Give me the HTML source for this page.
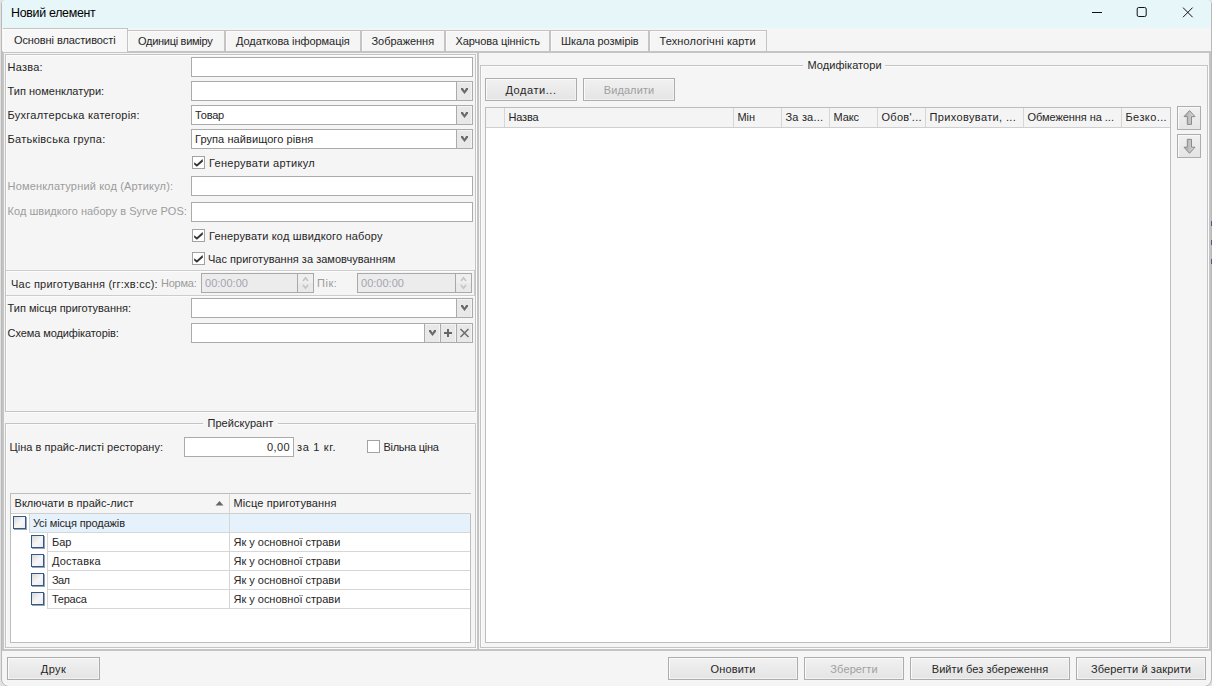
<!DOCTYPE html>
<html><head><meta charset="utf-8"><style>
html,body{margin:0;padding:0;}
body{width:1212px;height:686px;position:relative;overflow:hidden;background:#e2e2e2;font-family:"Liberation Sans",sans-serif;}
.t{position:absolute;white-space:nowrap;line-height:13px;font-family:"Liberation Sans",sans-serif;}
</style></head><body>
<div style="position:absolute;left:1px;top:0px;width:1211px;height:687px;box-sizing:border-box;background:#f5f5f5;border:1px solid #b9b9b9;border-radius:4px 4px 8px 8px;"></div>
<div style="position:absolute;left:2px;top:0px;width:1209px;height:28px;background:#e7f6f8;border-radius:3px 3px 0 0;"></div>
<div class="t" style="left:11px;top:7.20px;font-size:12.4px;color:#000;letter-spacing:-0.292px;">Новий елемент</div>
<svg style="position:absolute;left:1085px;top:4px" width="120" height="18" viewBox="0 0 120 18"><line x1="7" y1="8.5" x2="17" y2="8.5" stroke="#111" stroke-width="1"/><rect x="52.2" y="3.5" width="9" height="9" rx="1.5" fill="none" stroke="#111" stroke-width="1"/><path d="M98 3.6 L107.6 13.2 M107.6 3.6 L98 13.2" stroke="#111" stroke-width="1"/></svg>
<div style="position:absolute;left:2px;top:51px;width:1209px;height:600px;box-sizing:border-box;border:2px solid #c4c4c4;"></div>
<div style="position:absolute;left:3px;top:28px;width:125px;height:24px;box-sizing:border-box;background:#f7f7f7;border:1px solid #c4c4c4;border-left:none;border-bottom:none;box-shadow:inset 1px 1px 0 #fbfbfb;"></div>
<div class="t" style="left:14px;top:33.69px;font-size:11px;color:#262626;letter-spacing:-0.094px;">Основні властивості</div>
<div style="position:absolute;left:128px;top:30px;width:97px;height:21px;box-sizing:border-box;background:#f5f5f5;border:1px solid #c4c4c4;border-left:none;border-bottom:none;box-shadow:inset 1px 1px 0 #fafafa;"></div>
<div class="t" style="left:138px;top:34.69px;font-size:11px;color:#262626;letter-spacing:-0.285px;">Одиниці виміру</div>
<div style="position:absolute;left:225px;top:30px;width:136px;height:21px;box-sizing:border-box;background:#f5f5f5;border:1px solid #c4c4c4;border-left:1px solid #c4c4c4;border-bottom:none;box-shadow:inset 1px 1px 0 #fafafa;"></div>
<div class="t" style="left:236px;top:34.69px;font-size:11px;color:#262626;letter-spacing:-0.063px;">Додаткова інформація</div>
<div style="position:absolute;left:361px;top:30px;width:84px;height:21px;box-sizing:border-box;background:#f5f5f5;border:1px solid #c4c4c4;border-left:1px solid #c4c4c4;border-bottom:none;box-shadow:inset 1px 1px 0 #fafafa;"></div>
<div class="t" style="left:371.5px;top:34.69px;font-size:11px;color:#262626;letter-spacing:-0.033px;">Зображення</div>
<div style="position:absolute;left:445px;top:30px;width:105px;height:21px;box-sizing:border-box;background:#f5f5f5;border:1px solid #c4c4c4;border-left:1px solid #c4c4c4;border-bottom:none;box-shadow:inset 1px 1px 0 #fafafa;"></div>
<div class="t" style="left:455.5px;top:34.69px;font-size:11px;color:#262626;letter-spacing:-0.073px;">Харчова цінність</div>
<div style="position:absolute;left:550px;top:30px;width:99px;height:21px;box-sizing:border-box;background:#f5f5f5;border:1px solid #c4c4c4;border-left:1px solid #c4c4c4;border-bottom:none;box-shadow:inset 1px 1px 0 #fafafa;"></div>
<div class="t" style="left:561px;top:34.69px;font-size:11px;color:#262626;letter-spacing:-0.054px;">Шкала розмірів</div>
<div style="position:absolute;left:649px;top:30px;width:118px;height:21px;box-sizing:border-box;background:#f5f5f5;border:1px solid #c4c4c4;border-left:1px solid #c4c4c4;border-bottom:none;box-shadow:inset 1px 1px 0 #fafafa;"></div>
<div class="t" style="left:659.5px;top:34.69px;font-size:11px;color:#262626;letter-spacing:0.118px;">Технологічні карти</div>
<div style="position:absolute;left:477px;top:53px;width:2px;height:596px;background:#c4c4c4;"></div>
<div style="position:absolute;left:5px;top:54px;width:471px;height:358px;box-sizing:border-box;border:1px solid #c4c4c4;box-shadow:inset 1px 1px 0 #fcfcfc,1px 1px 0 #fcfcfc;"></div>
<div class="t" style="left:7.6px;top:60.69px;font-size:11px;color:#262626;letter-spacing:0.220px;">Назва:</div>
<div class="t" style="left:7.6px;top:84.69px;font-size:11px;color:#262626;letter-spacing:0.006px;">Тип номенклатури:</div>
<div class="t" style="left:7.6px;top:108.69px;font-size:11px;color:#262626;letter-spacing:0.248px;">Бухгалтерська категорія:</div>
<div class="t" style="left:7.6px;top:132.69px;font-size:11px;color:#262626;letter-spacing:0.276px;">Батьківська група:</div>
<div class="t" style="left:7.6px;top:179.69px;font-size:11px;color:#9c9c9c;letter-spacing:0.168px;">Номенклатурний код (Артикул):</div>
<div class="t" style="left:7.6px;top:204.69px;font-size:11px;color:#9c9c9c;letter-spacing:0.023px;">Код швидкого набору в Syrve POS:</div>
<div style="position:absolute;left:191px;top:57px;width:282px;height:20px;box-sizing:border-box;background:#fff;border:1px solid #ababab;"></div>
<div style="position:absolute;left:191px;top:81px;width:282px;height:20px;box-sizing:border-box;background:#fff;border:1px solid #ababab;"></div>
<div style="position:absolute;left:456px;top:81px;width:17px;height:20px;box-sizing:border-box;background:#e8e8e8;border:1px solid #ababab;box-shadow:inset -1px 1px 0 #f4f4f4;"></div>
<svg style="position:absolute;left:456px;top:81px" width="17" height="20" viewBox="0 0 17 20"><path d="M5 7 H6.9 L8.5 9.8 L10.1 7 H12 V8.6 L8.5 13.1 L5 8.6 Z" fill="#686868"/></svg>
<div style="position:absolute;left:191px;top:105px;width:282px;height:20px;box-sizing:border-box;background:#fff;border:1px solid #ababab;"></div>
<div style="position:absolute;left:456px;top:105px;width:17px;height:20px;box-sizing:border-box;background:#e8e8e8;border:1px solid #ababab;box-shadow:inset -1px 1px 0 #f4f4f4;"></div>
<svg style="position:absolute;left:456px;top:105px" width="17" height="20" viewBox="0 0 17 20"><path d="M5 7 H6.9 L8.5 9.8 L10.1 7 H12 V8.6 L8.5 13.1 L5 8.6 Z" fill="#686868"/></svg>
<div class="t" style="left:195px;top:108.69px;font-size:11px;color:#262626;letter-spacing:-0.175px;">Товар</div>
<div style="position:absolute;left:191px;top:129px;width:282px;height:20px;box-sizing:border-box;background:#fff;border:1px solid #ababab;"></div>
<div style="position:absolute;left:456px;top:129px;width:17px;height:20px;box-sizing:border-box;background:#e8e8e8;border:1px solid #ababab;box-shadow:inset -1px 1px 0 #f4f4f4;"></div>
<svg style="position:absolute;left:456px;top:129px" width="17" height="20" viewBox="0 0 17 20"><path d="M5 7 H6.9 L8.5 9.8 L10.1 7 H12 V8.6 L8.5 13.1 L5 8.6 Z" fill="#686868"/></svg>
<div class="t" style="left:195px;top:132.69px;font-size:11px;color:#262626;letter-spacing:0.080px;">Група найвищого рівня</div>
<div style="position:absolute;left:192px;top:156px;width:13px;height:13px;box-sizing:border-box;background:#fff;border:1px solid #a2a2a2;"></div>
<svg style="position:absolute;left:192px;top:156px" width="13" height="13" viewBox="0 0 13 13"><path d="M2.1 6.2 L4.9 8.2 L10.6 2.9 L10.9 5.5 L4.9 10.8 L2.2 8.4 Z" fill="#333"/></svg>
<div class="t" style="left:209px;top:156.69px;font-size:11px;color:#262626;letter-spacing:0.294px;">Генерувати артикул</div>
<div style="position:absolute;left:191px;top:176px;width:282px;height:20px;box-sizing:border-box;background:#fff;border:1px solid #ababab;"></div>
<div style="position:absolute;left:191px;top:202px;width:282px;height:20px;box-sizing:border-box;background:#fff;border:1px solid #ababab;"></div>
<div style="position:absolute;left:192px;top:229px;width:13px;height:13px;box-sizing:border-box;background:#fff;border:1px solid #a2a2a2;"></div>
<svg style="position:absolute;left:192px;top:229px" width="13" height="13" viewBox="0 0 13 13"><path d="M2.1 6.2 L4.9 8.2 L10.6 2.9 L10.9 5.5 L4.9 10.8 L2.2 8.4 Z" fill="#333"/></svg>
<div class="t" style="left:209px;top:229.69px;font-size:11px;color:#262626;letter-spacing:0.172px;">Генерувати код швидкого набору</div>
<div style="position:absolute;left:192px;top:252px;width:13px;height:13px;box-sizing:border-box;background:#fff;border:1px solid #a2a2a2;"></div>
<svg style="position:absolute;left:192px;top:252px" width="13" height="13" viewBox="0 0 13 13"><path d="M2.1 6.2 L4.9 8.2 L10.6 2.9 L10.9 5.5 L4.9 10.8 L2.2 8.4 Z" fill="#333"/></svg>
<div class="t" style="left:208px;top:252.69px;font-size:11px;color:#262626;letter-spacing:0.019px;">Час приготування за замовчуванням</div>
<div style="position:absolute;left:6px;top:270px;width:469px;height:26px;box-sizing:border-box;border:1px solid #cdcdcd;border-left:none;box-shadow:inset 0 1px 0 #fcfcfc,0 1px 0 #fcfcfc;"></div>
<div class="t" style="left:11px;top:277.69px;font-size:11px;color:#262626;letter-spacing:0.230px;">Час приготування (гг:хв:сс):</div>
<div class="t" style="left:161px;top:276.69px;font-size:11px;color:#9c9c9c;letter-spacing:-0.240px;">Норма:</div>
<div style="position:absolute;left:201px;top:273px;width:113px;height:20px;box-sizing:border-box;background:#ececec;border:1px solid #a9a9a9;"></div>
<div style="position:absolute;left:297px;top:273px;width:17px;height:20px;box-sizing:border-box;border:1px solid #a9a9a9;background:linear-gradient(#efefef 0,#efefef 50%,#e9e9e9 50%,#e9e9e9 100%);"></div>
<svg style="position:absolute;left:297px;top:273px" width="17" height="20" viewBox="0 0 17 20"><path d="M6 7.9 L8.5 4.8 L11 7.9 M6 12.1 L8.5 15.2 L11 12.1" fill="none" stroke="#c4c4c4" stroke-width="1.6"/></svg>
<div class="t" style="left:205px;top:276.69px;font-size:11px;color:#a4a4b0;letter-spacing:0.014px;">00:00:00</div>
<div class="t" style="left:317px;top:276.69px;font-size:11px;color:#9c9c9c;letter-spacing:0.533px;">Пік:</div>
<div style="position:absolute;left:357px;top:273px;width:115px;height:20px;box-sizing:border-box;background:#ececec;border:1px solid #a9a9a9;"></div>
<div style="position:absolute;left:455px;top:273px;width:17px;height:20px;box-sizing:border-box;border:1px solid #a9a9a9;background:linear-gradient(#efefef 0,#efefef 50%,#e9e9e9 50%,#e9e9e9 100%);"></div>
<svg style="position:absolute;left:455px;top:273px" width="17" height="20" viewBox="0 0 17 20"><path d="M6 7.9 L8.5 4.8 L11 7.9 M6 12.1 L8.5 15.2 L11 12.1" fill="none" stroke="#c4c4c4" stroke-width="1.6"/></svg>
<div class="t" style="left:361px;top:276.69px;font-size:11px;color:#a4a4b0;letter-spacing:0.014px;">00:00:00</div>
<div class="t" style="left:7.6px;top:301.69px;font-size:11px;color:#262626;letter-spacing:-0.014px;">Тип місця приготування:</div>
<div style="position:absolute;left:191px;top:298px;width:282px;height:20px;box-sizing:border-box;background:#fff;border:1px solid #ababab;"></div>
<div style="position:absolute;left:456px;top:298px;width:17px;height:20px;box-sizing:border-box;background:#e8e8e8;border:1px solid #ababab;box-shadow:inset -1px 1px 0 #f4f4f4;"></div>
<svg style="position:absolute;left:456px;top:298px" width="17" height="20" viewBox="0 0 17 20"><path d="M5 7 H6.9 L8.5 9.8 L10.1 7 H12 V8.6 L8.5 13.1 L5 8.6 Z" fill="#686868"/></svg>
<div class="t" style="left:7.6px;top:326.69px;font-size:11px;color:#262626;letter-spacing:-0.100px;">Схема модифікаторів:</div>
<div style="position:absolute;left:191px;top:323px;width:282px;height:20px;box-sizing:border-box;background:#fff;border:1px solid #ababab;"></div>
<div style="position:absolute;left:424px;top:323px;width:17px;height:20px;box-sizing:border-box;background:#e8e8e8;border:1px solid #ababab;box-shadow:inset -1px 1px 0 #f4f4f4;"></div>
<div style="position:absolute;left:440px;top:323px;width:17px;height:20px;box-sizing:border-box;background:#e8e8e8;border:1px solid #ababab;box-shadow:inset -1px 1px 0 #f4f4f4;"></div>
<div style="position:absolute;left:456px;top:323px;width:17px;height:20px;box-sizing:border-box;background:#e8e8e8;border:1px solid #ababab;box-shadow:inset -1px 1px 0 #f4f4f4;"></div>
<svg style="position:absolute;left:424px;top:323px" width="17" height="20" viewBox="0 0 17 20"><path d="M5 7 H6.9 L8.5 9.8 L10.1 7 H12 V8.6 L8.5 13.1 L5 8.6 Z" fill="#686868"/></svg>
<svg style="position:absolute;left:440px;top:323px" width="17" height="20" viewBox="0 0 17 20"><path d="M8 6 V14 M4 10 H12" stroke="#666" stroke-width="2"/></svg>
<svg style="position:absolute;left:456px;top:323px" width="17" height="20" viewBox="0 0 17 20"><path d="M4.5 6 L12.5 14 M12.5 6 L4.5 14" stroke="#6b6b6b" stroke-width="1.5"/></svg>
<div style="position:absolute;left:5px;top:423px;width:471px;height:225px;box-sizing:border-box;border:1px solid #c4c4c4;box-shadow:inset 1px 1px 0 #fcfcfc,1px 1px 0 #fcfcfc;"></div>
<div style="position:absolute;left:203px;top:415px;width:75px;height:14px;background:#f5f5f5;"></div>
<div class="t" style="left:207.5px;top:416.69px;font-size:11px;color:#262626;letter-spacing:0.040px;">Прейскурант</div>
<div class="t" style="left:9.5px;top:440.69px;font-size:11px;color:#262626;letter-spacing:0.039px;">Ціна в прайс-листі ресторану:</div>
<div style="position:absolute;left:184px;top:437px;width:110px;height:20px;box-sizing:border-box;background:#fff;border:1px solid #ababab;"></div>
<div class="t" style="left:0px;top:440.69px;font-size:11px;color:#262626;letter-spacing:0.400px;width:290px;text-align:right;">0,00</div>
<div class="t" style="left:297px;top:440.69px;font-size:11px;color:#262626;letter-spacing:0.671px;">за 1 кг.</div>
<div style="position:absolute;left:367px;top:440px;width:13px;height:13px;box-sizing:border-box;background:#fff;border:1px solid #a2a2a2;"></div>
<div class="t" style="left:383.5px;top:440.69px;font-size:11px;color:#262626;letter-spacing:-0.280px;">Вільна ціна</div>
<div style="position:absolute;left:10px;top:493px;width:461px;height:150px;box-sizing:border-box;background:#fff;border:1px solid #bdbdbd;"></div>
<div style="position:absolute;left:11px;top:494px;width:460px;height:20px;background:#f5f5f5;border-bottom:1px solid #cfcfcf;box-sizing:border-box;"></div>
<div style="position:absolute;left:229px;top:494px;width:1px;height:19px;background:#d6d6d6;"></div>
<div class="t" style="left:14.5px;top:496.69px;font-size:11px;color:#262626;letter-spacing:0.050px;">Включати в прайс-лист</div>
<svg style="position:absolute;left:215px;top:499px" width="10" height="8" viewBox="0 0 10 8"><path d="M0.5 6.5 L4.5 2 L8.5 6.5 Z" fill="#666"/></svg>
<div class="t" style="left:233.5px;top:496.69px;font-size:11px;color:#262626;letter-spacing:0.118px;">Місце приготування</div>
<div style="position:absolute;left:29px;top:514px;width:441px;height:19px;background:#e5f1fb;border-bottom:1px solid #d6d6d6;box-sizing:border-box;"></div>
<div style="position:absolute;left:229px;top:514px;width:1px;height:19px;background:#d6d6d6;"></div>
<div style="position:absolute;left:29px;top:514px;width:1px;height:19px;background:#d6d6d6;"></div>
<div style="position:absolute;left:13px;top:516px;width:13px;height:13px;box-sizing:border-box;background:linear-gradient(135deg,#d9d9d9 0%,#f7f7f7 55%,#ececec 100%);border:1px solid #35588c;box-shadow:1px 1px 0 #9aa3b0;"></div>
<div class="t" style="left:33px;top:516.69px;font-size:11px;color:#262626;letter-spacing:-0.129px;">Усі місця продажів</div>
<div style="position:absolute;left:47px;top:533px;width:423px;height:19px;border-bottom:1px solid #d6d6d6;box-sizing:border-box;"></div>
<div style="position:absolute;left:229px;top:533px;width:1px;height:19px;background:#d6d6d6;"></div>
<div style="position:absolute;left:47px;top:533px;width:1px;height:19px;background:#d6d6d6;"></div>
<div style="position:absolute;left:31px;top:535px;width:13px;height:13px;box-sizing:border-box;background:linear-gradient(135deg,#d9d9d9 0%,#f7f7f7 55%,#ececec 100%);border:1px solid #35588c;box-shadow:1px 1px 0 #9aa3b0;"></div>
<div class="t" style="left:52px;top:535.69px;font-size:11px;color:#262626;">Бар</div>
<div class="t" style="left:233.5px;top:535.69px;font-size:11px;color:#262626;letter-spacing:-0.016px;">Як у основної страви</div>
<div style="position:absolute;left:47px;top:552px;width:423px;height:19px;border-bottom:1px solid #d6d6d6;box-sizing:border-box;"></div>
<div style="position:absolute;left:229px;top:552px;width:1px;height:19px;background:#d6d6d6;"></div>
<div style="position:absolute;left:47px;top:552px;width:1px;height:19px;background:#d6d6d6;"></div>
<div style="position:absolute;left:31px;top:554px;width:13px;height:13px;box-sizing:border-box;background:linear-gradient(135deg,#d9d9d9 0%,#f7f7f7 55%,#ececec 100%);border:1px solid #35588c;box-shadow:1px 1px 0 #9aa3b0;"></div>
<div class="t" style="left:52px;top:554.69px;font-size:11px;color:#262626;letter-spacing:0.186px;">Доставка</div>
<div class="t" style="left:233.5px;top:554.69px;font-size:11px;color:#262626;letter-spacing:-0.016px;">Як у основної страви</div>
<div style="position:absolute;left:47px;top:571px;width:423px;height:19px;border-bottom:1px solid #d6d6d6;box-sizing:border-box;"></div>
<div style="position:absolute;left:229px;top:571px;width:1px;height:19px;background:#d6d6d6;"></div>
<div style="position:absolute;left:47px;top:571px;width:1px;height:19px;background:#d6d6d6;"></div>
<div style="position:absolute;left:31px;top:573px;width:13px;height:13px;box-sizing:border-box;background:linear-gradient(135deg,#d9d9d9 0%,#f7f7f7 55%,#ececec 100%);border:1px solid #35588c;box-shadow:1px 1px 0 #9aa3b0;"></div>
<div class="t" style="left:52px;top:573.69px;font-size:11px;color:#262626;letter-spacing:-0.600px;">Зал</div>
<div class="t" style="left:233.5px;top:573.69px;font-size:11px;color:#262626;letter-spacing:-0.016px;">Як у основної страви</div>
<div style="position:absolute;left:47px;top:590px;width:423px;height:19px;border-bottom:1px solid #d6d6d6;box-sizing:border-box;"></div>
<div style="position:absolute;left:229px;top:590px;width:1px;height:19px;background:#d6d6d6;"></div>
<div style="position:absolute;left:47px;top:590px;width:1px;height:19px;background:#d6d6d6;"></div>
<div style="position:absolute;left:31px;top:592px;width:13px;height:13px;box-sizing:border-box;background:linear-gradient(135deg,#d9d9d9 0%,#f7f7f7 55%,#ececec 100%);border:1px solid #35588c;box-shadow:1px 1px 0 #9aa3b0;"></div>
<div class="t" style="left:52px;top:592.69px;font-size:11px;color:#262626;letter-spacing:-0.240px;">Тераса</div>
<div class="t" style="left:233.5px;top:592.69px;font-size:11px;color:#262626;letter-spacing:-0.016px;">Як у основної страви</div>
<div style="position:absolute;left:480px;top:65px;width:728px;height:583px;box-sizing:border-box;border:1px solid #c4c4c4;box-shadow:inset 1px 1px 0 #fcfcfc,1px 1px 0 #fcfcfc;"></div>
<div style="position:absolute;left:803px;top:58px;width:82px;height:14px;background:#f5f5f5;"></div>
<div class="t" style="left:807.5px;top:58.69px;font-size:11px;color:#262626;letter-spacing:0.055px;">Модифікатори</div>
<div style="position:absolute;left:485px;top:78px;width:92px;height:23px;box-sizing:border-box;background:linear-gradient(#f1f1f1,#e4e4e4);border:1px solid #adadad;box-shadow:inset 1px 1px 0 #fafafa,inset -1px -1px 0 #f2f2f2;"></div>
<div class="t" style="left:485px;top:83.69px;font-size:11px;color:#262626;letter-spacing:0.562px;width:92px;text-align:center;">Додати...</div>
<div style="position:absolute;left:583px;top:78px;width:92px;height:23px;box-sizing:border-box;background:linear-gradient(#f1f1f1,#e4e4e4);border:1px solid #adadad;box-shadow:inset 1px 1px 0 #fafafa,inset -1px -1px 0 #f2f2f2;"></div>
<div class="t" style="left:583px;top:83.69px;font-size:11px;color:#a0a0a0;letter-spacing:0.100px;width:92px;text-align:center;">Видалити</div>
<div style="position:absolute;left:485px;top:107px;width:686px;height:536px;box-sizing:border-box;background:#fff;border:1px solid #bdbdbd;"></div>
<div style="position:absolute;left:486px;top:108px;width:684px;height:20px;background:#f4f4f4;border-bottom:1px solid #cfcfcf;box-sizing:border-box;"></div>
<div style="position:absolute;left:504px;top:108px;width:1px;height:19px;background:#d6d6d6;"></div>
<div class="t" style="left:508.5px;top:110.69px;font-size:11px;color:#262626;letter-spacing:-0.175px;">Назва</div>
<div style="position:absolute;left:733px;top:108px;width:1px;height:19px;background:#d6d6d6;"></div>
<div class="t" style="left:737.5px;top:110.69px;font-size:11px;color:#262626;letter-spacing:-0.050px;">Мін</div>
<div style="position:absolute;left:781px;top:108px;width:1px;height:19px;background:#d6d6d6;"></div>
<div class="t" style="left:785.5px;top:110.69px;font-size:11px;color:#262626;letter-spacing:0.186px;">За за...</div>
<div style="position:absolute;left:829px;top:108px;width:1px;height:19px;background:#d6d6d6;"></div>
<div class="t" style="left:833.5px;top:110.69px;font-size:11px;color:#262626;letter-spacing:-0.133px;">Макс</div>
<div style="position:absolute;left:877px;top:108px;width:1px;height:19px;background:#d6d6d6;"></div>
<div class="t" style="left:881.5px;top:110.69px;font-size:11px;color:#262626;letter-spacing:0.286px;">Обов'...</div>
<div style="position:absolute;left:925px;top:108px;width:1px;height:19px;background:#d6d6d6;"></div>
<div class="t" style="left:929.5px;top:110.69px;font-size:11px;color:#262626;letter-spacing:0.367px;">Приховувати, ...</div>
<div style="position:absolute;left:1023px;top:108px;width:1px;height:19px;background:#d6d6d6;"></div>
<div class="t" style="left:1027.5px;top:110.69px;font-size:11px;color:#262626;letter-spacing:-0.053px;">Обмеження на ...</div>
<div style="position:absolute;left:1121px;top:108px;width:1px;height:19px;background:#d6d6d6;"></div>
<div class="t" style="left:1125.5px;top:110.69px;font-size:11px;color:#262626;letter-spacing:0.400px;">Безко...</div>
<div style="position:absolute;left:1177px;top:106px;width:24px;height:24px;box-sizing:border-box;background:linear-gradient(#f1f1f1,#e4e4e4);border:1px solid #adadad;box-shadow:inset 1px 1px 0 #fafafa;"></div>
<div style="position:absolute;left:1177px;top:134px;width:24px;height:24px;box-sizing:border-box;background:linear-gradient(#f1f1f1,#e4e4e4);border:1px solid #adadad;box-shadow:inset 1px 1px 0 #fafafa;"></div>
<svg style="position:absolute;left:1177px;top:106px" width="24" height="24" viewBox="0 0 24 24"><defs><linearGradient id="ga" x1="0" x2="1"><stop offset="0" stop-color="#a6a6a6"/><stop offset="0.55" stop-color="#c4c4c4"/><stop offset="1" stop-color="#e0e0e0"/></linearGradient></defs><path d="M12.5 4.6 L18 10.6 L14.5 10.6 L14.5 18.4 L10.3 18.4 L10.3 10.6 L7 10.6 Z" fill="url(#ga)" stroke="#8a8a8a" stroke-width="1" stroke-linejoin="round"/></svg>
<svg style="position:absolute;left:1177px;top:134px" width="24" height="24" viewBox="0 0 24 24"><path d="M12.5 19.3 L18 13.2 L14.5 13.2 L14.5 5.3 L10.3 5.3 L10.3 13.2 L7 13.2 Z" fill="url(#ga)" stroke="#8a8a8a" stroke-width="1" stroke-linejoin="round"/></svg>
<div style="position:absolute;left:1211px;top:221px;width:1px;height:5px;background:#4a5a90;"></div>
<div style="position:absolute;left:1211px;top:240px;width:1px;height:5px;background:#4a5a90;"></div>
<div style="position:absolute;left:1211px;top:259px;width:1px;height:5px;background:#4a5a90;"></div>
<div style="position:absolute;left:7px;top:657px;width:93px;height:23px;box-sizing:border-box;background:linear-gradient(#f1f1f1,#e4e4e4);border:1px solid #adadad;box-shadow:inset 1px 1px 0 #fafafa,inset -1px -1px 0 #f2f2f2;"></div>
<div class="t" style="left:7px;top:662.69px;font-size:11px;color:#262626;letter-spacing:0.433px;width:93px;text-align:center;">Друк</div>
<div style="position:absolute;left:668px;top:657px;width:130px;height:23px;box-sizing:border-box;background:linear-gradient(#f1f1f1,#e4e4e4);border:1px solid #adadad;box-shadow:inset 1px 1px 0 #fafafa,inset -1px -1px 0 #f2f2f2;"></div>
<div class="t" style="left:668px;top:662.69px;font-size:11px;color:#262626;letter-spacing:0.167px;width:130px;text-align:center;">Оновити</div>
<div style="position:absolute;left:804px;top:657px;width:100px;height:23px;box-sizing:border-box;background:linear-gradient(#f1f1f1,#e4e4e4);border:1px solid #adadad;box-shadow:inset 1px 1px 0 #fafafa,inset -1px -1px 0 #f2f2f2;"></div>
<div class="t" style="left:804px;top:662.69px;font-size:11px;color:#a0a0a0;letter-spacing:0.114px;width:100px;text-align:center;">Зберегти</div>
<div style="position:absolute;left:910px;top:657px;width:160px;height:23px;box-sizing:border-box;background:linear-gradient(#f1f1f1,#e4e4e4);border:1px solid #adadad;box-shadow:inset 1px 1px 0 #fafafa,inset -1px -1px 0 #f2f2f2;"></div>
<div class="t" style="left:910px;top:662.69px;font-size:11px;color:#262626;letter-spacing:0.079px;width:160px;text-align:center;">Вийти без збереження</div>
<div style="position:absolute;left:1076px;top:657px;width:130px;height:23px;box-sizing:border-box;background:linear-gradient(#f1f1f1,#e4e4e4);border:1px solid #adadad;box-shadow:inset 1px 1px 0 #fafafa,inset -1px -1px 0 #f2f2f2;"></div>
<div class="t" style="left:1076px;top:662.69px;font-size:11px;color:#262626;letter-spacing:0.118px;width:130px;text-align:center;">Зберегти й закрити</div>
</body></html>
